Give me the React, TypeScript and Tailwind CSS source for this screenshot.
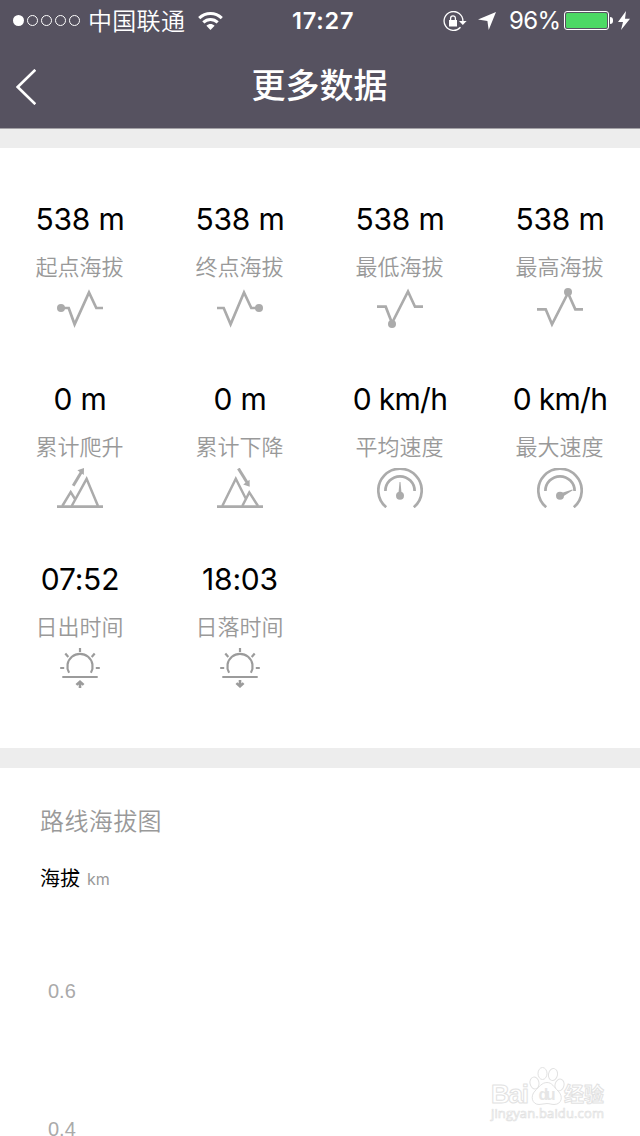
import type { ReactNode } from "react";

type Stat = {
  value: string;
  label: string;
  color: string;
  icon: ReactNode;
};

const stats: Stat[] = [
  {
    value: "538 m",
    label: "起点海拔",
    color: "text-[#ababab]",
    icon: (
      <>
        <path d="M4 20H11.7L17.6 36.3L32 4.5L39.3 20H46" />
        <circle cx="4" cy="20" r="4" fill="currentColor" stroke="none" />
      </>
    ),
  },
  {
    value: "538 m",
    label: "终点海拔",
    color: "text-[#ababab]",
    icon: (
      <>
        <path d="M0 20H6.7L13.6 36.3L27 4.5L34.3 20H42" />
        <circle cx="42" cy="20" r="4" fill="currentColor" stroke="none" />
      </>
    ),
  },
  {
    value: "538 m",
    label: "最低海拔",
    color: "text-[#ababab]",
    icon: (
      <>
        <path d="M0 18.7H8.7L15 35L31 3.5L38 18.7H46" />
        <circle cx="15" cy="36" r="4" fill="currentColor" stroke="none" />
      </>
    ),
  },
  {
    value: "538 m",
    label: "最高海拔",
    color: "text-[#ababab]",
    icon: (
      <>
        <path d="M0 21.3H8.7L15 36.3L31 5L38.3 21.3H46" />
        <circle cx="31" cy="4" r="4" fill="currentColor" stroke="none" />
      </>
    ),
  },
  {
    value: "0 m",
    label: "累计爬升",
    color: "text-[#ababab]",
    icon: (
      <>
        <path d="M0 38.7H46" />
        <path d="M5.3 38L13.7 24.2L18 31M14.7 38L29.6 10.8L41 38" strokeWidth="2.5" />
        <path d="M16.2 17.7L25 3" strokeWidth="3" />
        <path d="M20.4 2.3L27 0L26.8 7Z" fill="currentColor" stroke="none" />
      </>
    ),
  },
  {
    value: "0 m",
    label: "累计下降",
    color: "text-[#ababab]",
    icon: (
      <>
        <path d="M0 38.7H46" />
        <path d="M5.3 38L18.8 10.8L29 31M25.3 38L32.3 24.4L41 38" strokeWidth="2.5" />
        <path d="M21.4 0.5L31 16" strokeWidth="3" />
        <path d="M26.2 16.5L32.7 18.7L32.6 11.7Z" fill="currentColor" stroke="none" />
      </>
    ),
  },
  {
    value: "0 km/h",
    label: "平均速度",
    color: "text-[#ababab]",
    icon: (
      <>
        <path d="M9.2 39.2A21.7 21.7 0 1 1 36.8 39.2" />
        <path d="M8.4 22.9A14.6 14.6 0 0 1 37.6 22.9" />
        <path d="M22.5 14H23.5L24.5 25H21.5Z" fill="currentColor" stroke="none" />
        <circle cx="23" cy="27.7" r="4" fill="currentColor" stroke="none" />
      </>
    ),
  },
  {
    value: "0 km/h",
    label: "最大速度",
    color: "text-[#ababab]",
    icon: (
      <>
        <path d="M9.2 39.2A21.7 21.7 0 1 1 36.8 39.2" />
        <path d="M8.4 22.9A14.6 14.6 0 0 1 37.6 22.9" />
        <path d="M35.3 21.5L35.8 22.3L26 28.5L24.5 25Z" fill="currentColor" stroke="none" />
        <circle cx="23" cy="27.7" r="4" fill="currentColor" stroke="none" />
      </>
    ),
  },
  {
    value: "07:52",
    label: "日出时间",
    color: "text-[#9b9b9b]",
    icon: (
      <g strokeWidth="2.2">
        <Sun />
        <path d="M23 40V33.5M19.4 36.9L23 33.7L26.6 36.9" strokeWidth="2.6" />
      </g>
    ),
  },
  {
    value: "18:03",
    label: "日落时间",
    color: "text-[#9b9b9b]",
    icon: (
      <g strokeWidth="2.2">
        <Sun />
        <path d="M23 32V38.5M19.4 35.1L23 38.3L26.6 35.1" strokeWidth="2.6" />
      </g>
    ),
  },
];

function Sun() {
  return (
    <>
      <path d="M12.1 24.7A12.6 12.6 0 1 1 33.9 24.7" />
      <path d="M23 0V4M8.3 5.6L11.3 9M37.7 5.6L34.7 9M3.2 20H7.2M38.8 20H42.8" />
      <path d="M5.3 29H40.7" />
    </>
  );
}

function StatusBar() {
  return (
    <div className="flex h-[41px] items-center pl-[13px] pr-[9px] text-white">
      <div className="flex gap-[3px]">
        <span className="size-[11px] rounded-full bg-white" />
        <span className="size-[11px] rounded-full border border-white" />
        <span className="size-[11px] rounded-full border border-white" />
        <span className="size-[11px] rounded-full border border-white" />
        <span className="size-[11px] rounded-full border border-white" />
      </div>
      <span className="ml-2 w-[98px] whitespace-nowrap pt-[3px] text-[24px] font-[350] leading-[38px] tracking-[0.3px]">中国联通</span>
      <svg className="ml-[12px] h-[18px] w-[25px]" viewBox="0 0 25 18" fill="none" stroke="white" strokeWidth="3">
        <path d="M1.2 6.2C7.6 0 17.4 0 23.8 6.2" />
        <path d="M5.3 10.4C9.4 6.4 15.6 6.4 19.7 10.4" />
        <path d="M8.4 13.7C10.8 11.4 14.2 11.4 16.6 13.7L12.5 18Z" fill="white" stroke="none" />
      </svg>
      <span className="ml-[69px] w-[64px] whitespace-nowrap text-[23.5px] font-semibold tracking-[0.8px]">17:27</span>
      <svg className="ml-[87px] h-5 w-6 shrink-0" viewBox="0 0 24 20" fill="none" stroke="white" strokeWidth="1.3">
        <path d="M17.5 16.2A9.4 9.4 0 1 1 19.9 10" />
        <path d="M16 10H23.6L19.8 14Z" fill="white" stroke="none" />
        <path d="M6 9H14V15.5H6Z" fill="white" stroke="none" />
        <path d="M7.6 9V7.2A2.4 2.4 0 0 1 12.4 7.2V9" />
      </svg>
      <svg className="ml-[11px] h-[18px] w-[18px] shrink-0" viewBox="0 0 18 18" fill="white">
        <path d="M18 0L10.7 18L9.4 9L0 7.6Z" />
      </svg>
      <span className="ml-[13px] w-[49px] whitespace-nowrap text-[24px] tracking-[-0.6px]">96%</span>
      <div className="ml-[6px] h-[19px] w-[45px] shrink-0 rounded-[3px] border border-white p-px">
        <div className="h-full rounded-[1.5px] bg-[#4cd964]" />
      </div>
      <span className="ml-px h-[7px] w-[3px] shrink-0 rounded-r-full bg-white" />
      <svg className="ml-[5px] h-[19px] w-3 shrink-0" viewBox="0 0 12 19" fill="white">
        <path d="M8 0L0 11H5L3 19L12 7.7H7Z" />
      </svg>
    </div>
  );
}

function StatItem({ value, label, color, icon }: Stat) {
  return (
    <div className="flex h-[180px] flex-col items-center">
      <p
        className={`h-[38px] whitespace-nowrap text-[30px] leading-[38px] text-black ${
          value.endsWith("km/h") ? "tracking-[-0.7px]" : "tracking-[-0.2px]"
        }`}
      >
        {value}
      </p>
      <p className="mr-px mt-[13px] h-8 text-[22px] font-[350] leading-8 text-[#999]">{label}</p>
      <svg
        className={`mt-[5px] h-10 w-[46px] ${color}`}
        viewBox="0 0 46 40"
        fill="none"
        stroke="currentColor"
        strokeWidth="2.7"
      >
        {icon}
      </svg>
    </div>
  );
}

function Watermark() {
  return (
    <svg
      className="absolute left-[486px] top-[1062px] h-[64px] w-[124px]"
      viewBox="0 0 124 64"
      fill="white"
      stroke="#e2e2e2"
      strokeWidth="1"
      strokeLinejoin="round"
    >
      <g fontFamily="Liberation Sans, Noto Sans CJK SC, sans-serif" fontWeight="700">
        <text x="5" y="41" fontSize="26" textLength="38">Bai</text>
        <text x="78" y="40" fontSize="20" textLength="40">经验</text>
      </g>
      <ellipse cx="48.5" cy="21" rx="4.5" ry="6" transform="rotate(-12 48.5 21)" />
      <ellipse cx="56.5" cy="11.5" rx="4.5" ry="6" />
      <ellipse cx="67" cy="12.5" rx="4.5" ry="6" transform="rotate(12 67 12.5)" />
      <ellipse cx="73.5" cy="23" rx="4.5" ry="6" transform="rotate(15 73.5 23)" />
      <path d="M61 20.5C66 20.5 68 25 72 29C77.5 34 76 42.5 68 42.5C65 42.5 64 41.5 61 41.5C58 41.5 56 42.5 53 42.5C46 42.5 44 34 49 29C53 25 56 20.5 61 20.5Z" />
      <text x="52.5" y="38" fontSize="16" fontFamily="Liberation Sans, sans-serif" fontWeight="700" fill="#e6e6e6" stroke="none" textLength="17">du</text>
      <text x="5" y="56" fontSize="13" fontFamily="Open Sans, sans-serif" strokeWidth="0.7" textLength="113">jingyan.baidu.com</text>
    </svg>
  );
}

const App = () => {
  return (
    <div className="relative flex h-[1136px] w-[640px] flex-col overflow-hidden bg-white font-['Inter','Noto_Sans_CJK_SC',sans-serif]">
      <header className="h-[129px] shrink-0 border-b border-[#a3a1a6] bg-[#565260]">
        <StatusBar />
        <div className="grid h-[87px] grid-cols-[1fr_auto_1fr] items-center text-white">
          <svg className="ml-4 mt-[5px] h-9 w-5" viewBox="0 0 20 36" fill="none" stroke="white" strokeWidth="2.6">
            <path d="M19.3 0.8L1.7 18L19.3 35.2" />
          </svg>
          <h1 className="mr-px pt-0.5 text-[34px] font-medium leading-[83px]">更多数据</h1>
        </div>
      </header>

      <div className="h-[19px] shrink-0 bg-[#ededed]" />

      <section className="grid h-[600px] shrink-0 grid-cols-4 content-start pt-[52px]">
        {stats.map((stat) => (
          <StatItem key={stat.label} {...stat} />
        ))}
      </section>

      <div className="h-5 shrink-0 bg-[#ededed]" />

      <section className="px-10 pt-9">
        <h2 className="text-[24px] font-[350] leading-9 tracking-[0.4px] text-[#999]">路线海拔图</h2>
        <p className="mt-[23px] flex h-8 items-center gap-[7px] text-[20px] text-black">
          海拔 <span className="text-[16px] text-[#999]">km</span>
        </p>
        <div className="ml-2 mt-[84px] flex flex-col gap-[114px] font-['Liberation_Sans',sans-serif] text-[20px] leading-6 text-[#aaa]">
          <span>0.6</span>
          <span>0.4</span>
        </div>
      </section>

      <Watermark />
    </div>
  );
};

export default App;
